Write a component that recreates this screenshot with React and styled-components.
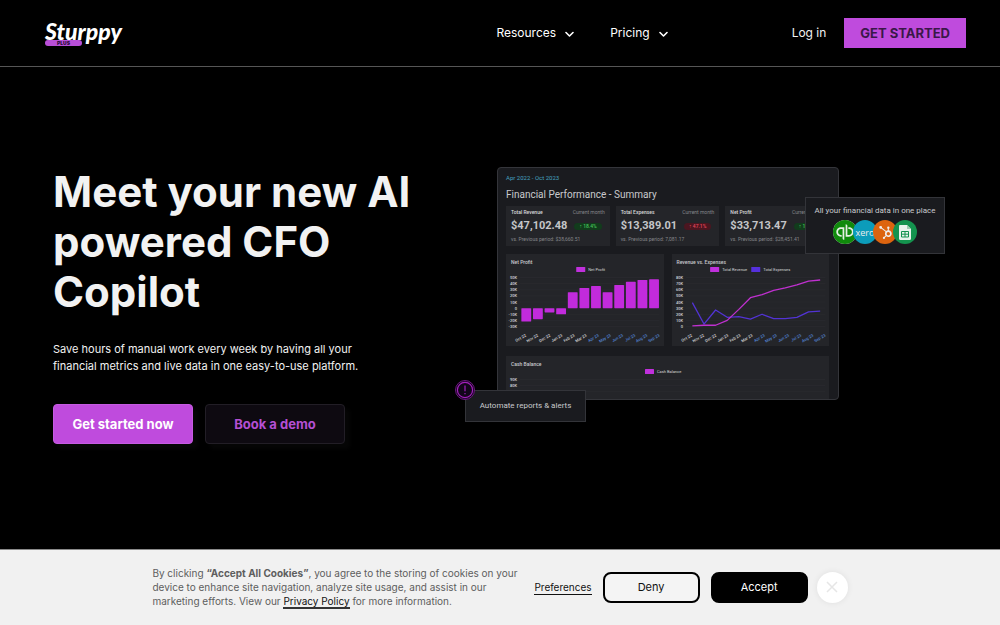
import React from 'react';
import styled, { createGlobalStyle } from 'styled-components';
import { SiHubspot, SiQuickbooks } from 'react-icons/si';

const GlobalStyle = createGlobalStyle`
  *, *::before, *::after {
    box-sizing: border-box;
  }

  body {
    margin: 0;
    background: #000;
    color: #f2f2f2;
    font-family: Inter, 'Liberation Sans', sans-serif;
  }

  a {
    color: inherit;
    text-decoration: none;
  }

  button {
    font-family: inherit;
    cursor: pointer;
  }

  h1, h2, h3, p, ul {
    margin: 0;
    padding: 0;
  }
`;

const Page = styled.div`
  min-height: 100vh;
  display: flex;
  flex-direction: column;
`;

/* Header */

const Header = styled.header`
  display: flex;
  align-items: center;
  padding: 18px 34px 18px 45px;
  border-bottom: 1px solid #565656;
`;

const Logo = styled.a`
  display: flex;
  flex-direction: column;
  align-items: flex-start;
`;

const LogoName = styled.span`
  font: italic 900 23px/22px Lato, sans-serif;
  color: #fff;
`;

const LogoTag = styled.span`
  width: 37px;
  margin-top: -2px;
  border-radius: 3px;
  background: #b94fd8;
  color: #2a0a38;
  font-size: 5px;
  font-weight: 900;
  line-height: 6px;
  text-align: center;
`;

const Nav = styled.nav`
  display: flex;
  gap: 36px;
  margin-left: auto;
`;

const NavButton = styled.button`
  display: flex;
  align-items: center;
  gap: 9px;
  padding: 0;
  border: 0;
  background: none;
  color: #fff;
  font-size: 12px;
  line-height: 20px;
`;

const Actions = styled.div`
  display: flex;
  align-items: center;
  gap: 18px;
  margin-left: 124px;
`;

const LoginLink = styled.a`
  font-size: 12px;
  line-height: 20px;
`;

const StartLink = styled.a`
  padding: 5px 16px;
  background: #bf4bdd;
  color: #3a1848;
  font-size: 13px;
  font-weight: 700;
  line-height: 20px;
`;

/* Hero */

const Hero = styled.main`
  flex: 1;
  display: grid;
  grid-template-columns: minmax(0, 1fr) minmax(0, 450px);
  align-items: start;
  gap: 32px;
  padding: 100px 53px 32px;
`;

const Title = styled.h1`
  font-size: 42px;
  font-weight: 700;
  line-height: 50px;
`;

const Lead = styled.p`
  max-width: 320px;
  margin-top: 24px;
  font-size: 11px;
  line-height: 17px;
`;

const Buttons = styled.div`
  display: flex;
  gap: 12px;
  margin-top: 29px;
`;

const Button = styled.a`
  width: 140px;
  padding: 9px 0;
  border: 1px solid ${({ $primary }) => ($primary ? '#c65be2' : '#221e26')};
  border-radius: 4px;
  background: ${({ $primary }) => ($primary ? '#bf4bdd' : '#0e0a11')};
  color: ${({ $primary }) => ($primary ? '#fff' : '#b44fd3')};
  box-shadow: 5px 5px 4px #060606;
  font-size: 13px;
  font-weight: 700;
  line-height: 20px;
  text-align: center;
`;

/* Dashboard preview */

const Preview = styled.div`
  position: relative;
  max-width: 342px;
  font-family: Roboto, sans-serif;
  color: #c9cacd;
`;

const Dashboard = styled.section`
  padding: 6px 9px 0 8px;
  border: 1px solid #34353a;
  border-radius: 4px;
  background: #1a1b1f;
`;

const Period = styled.p`
  color: #45a0bf;
  font-size: 6px;
  line-height: 8px;
`;

const DashboardTitle = styled.h2`
  margin: 7px 0 5px;
  font-size: 10px;
  font-weight: 400;
  line-height: 12px;
`;

const Metrics = styled.div`
  display: grid;
  grid-template-columns: repeat(3, 1fr);
  gap: 6px;
`;

const Metric = styled.div`
  padding: 3px 5px;
  background: #242529;
`;

const MetricRow = styled.div`
  display: flex;
  justify-content: ${({ $spread }) => ($spread ? 'space-between' : 'flex-start')};
  align-items: center;
  gap: ${({ $spread }) => ($spread ? 0 : '7px')};
`;

const Label = styled.span`
  color: ${({ $muted }) => ($muted ? '#85868a' : '#d8d9db')};
  font-size: 5px;
  font-weight: ${({ $muted }) => ($muted ? 400 : 500)};
  line-height: 7px;
`;

const Value = styled.strong`
  color: #c4c5c8;
  font-size: 11px;
  font-weight: 700;
  line-height: 20px;
`;

const Change = styled.span`
  padding: 0 5px;
  border-radius: 4px;
  background: ${({ $down }) => ($down ? '#4b1620' : '#123c1c')};
  color: ${({ $down }) => ($down ? '#e2475c' : '#45c45b')};
  font-size: 5px;
  font-weight: 500;
  line-height: 7px;
`;

const Charts = styled.div`
  display: grid;
  grid-template-columns: 1fr 1fr;
  gap: 8px;
  margin: 8px 0 10px;
`;

const Panel = styled.div`
  padding-top: 5px;
  background: #242529;

  svg {
    display: block;
    width: 100%;
  }
`;

const PanelTitle = styled.h3`
  padding-left: 5px;
  font-size: 5px;
  font-weight: 500;
  line-height: 6px;
`;

const ChartText = styled.text`
  fill: ${({ $blue }) => ($blue ? '#5587d6' : '#d4d5d8')};
  font: ${({ $bold }) => ($bold ? 500 : 400)} 4px Roboto, sans-serif;
`;

const Callout = styled.div`
  position: absolute;
  border: 1px solid #333439;
  background: #1a1b1f;
  text-align: center;
`;

const DataCallout = styled(Callout)`
  top: 30px;
  left: 308px;
  width: 140px;
  padding: 7px 0 9px;
  font-size: 8px;
  line-height: 12px;
`;

const AlertCallout = styled(Callout)`
  bottom: -22px;
  left: -32px;
  width: 121px;
  font-size: 8px;
  line-height: 30px;
`;

const AlertIcon = styled.svg`
  position: absolute;
  top: -11px;
  left: -11px;
`;

const Sources = styled.ul`
  display: flex;
  justify-content: center;
  margin-top: 3px;
  list-style: none;
`;

const Source = styled.li`
  display: flex;
  align-items: center;
  justify-content: center;
  width: 24px;
  height: 24px;
  border-radius: 50%;
  background: ${({ $color }) => $color};
  color: #eee;
  font: 9px 'Open Sans', sans-serif;

  & + & {
    margin-left: -4px;
  }
`;

/* Cookie banner */

const Banner = styled.aside`
  display: flex;
  align-items: center;
  justify-content: center;
  padding: 16px 24px 17px;
  border-top: 1px solid #8a8a8a;
  background: #f1f1f1;
  color: #5e5e5e;
`;

const BannerText = styled.p`
  max-width: 370px;
  margin-right: 12px;
  font-size: 10px;
  line-height: 14px;
`;

const PolicyLink = styled.a`
  border-bottom: 2px solid #333;
  color: #111;
`;

const Preferences = styled.button`
  padding: 0;
  margin-right: 11px;
  border: 0;
  border-bottom: 1px solid #111;
  background: none;
  color: #111;
  font-size: 10px;
  line-height: 14px;
`;

const Choice = styled.button`
  width: 97px;
  margin-right: ${({ $dark }) => ($dark ? '9px' : '11px')};
  padding: 0;
  border: 2px solid #000;
  border-radius: 8px;
  background: ${({ $dark }) => ($dark ? '#000' : '#f4f4f4')};
  color: ${({ $dark }) => ($dark ? '#fff' : '#111')};
  font-size: 11px;
  line-height: 27px;
`;

const Close = styled.button`
  display: flex;
  align-items: center;
  justify-content: center;
  width: 31px;
  height: 31px;
  padding: 0;
  border: 0;
  border-radius: 50%;
  background: #fff;
  box-shadow: 0 0 6px rgba(0, 0, 0, 0.08);
`;

const months = ['Oct 22', 'Nov 22', 'Dec 22', 'Jan 23', 'Feb 23', 'Mar 23', 'Apr 23', 'May 23', 'Jun 23', 'Jul 23', 'Aug 23', 'Sep 23'];
const profit = [-22, -18, -7, -10, 26, 33, 36, 26, 38, 43, 46, 47];
const revenue = [1, 2, 2, 10, 28, 47, 52, 59, 63, 68, 74, 76];
const expenses = [39, 4, 27, 15, 16, 12, 20, 13, 13, 15, 24, 25];

const metrics = [
  { label: 'Total Revenue', value: '$47,102.48', change: '↑ 18.4%', previous: '$38,660.51' },
  { label: 'Total Expenses', value: '$13,389.01', change: '↑ 47.1%', previous: '7,081.17', down: true },
  { label: 'Net Profit', value: '$33,713.47', change: '↑ 18.1%', previous: '$28,451.41' },
];

const STEP = 11.58;
const LABEL_STEP = 12.1;
const UNIT = 0.61;

const Chevron = () => (
  <svg width="9" height="20" viewBox="0 0 9 20" fill="none" stroke="#fff" strokeWidth="1.6" strokeLinecap="round" strokeLinejoin="round" aria-hidden="true">
    <path d="M1 9.5l3.5 3.5L8 9.5" />
  </svg>
);

const Axes = ({ top, bottom, right = 153 }) => {
  const ticks = [];
  for (let v = top; v >= bottom; v -= 10) ticks.push(v);
  return ticks.map((v) => {
    const y = 12.5 + (top - v) * UNIT;
    return (
      <g key={v}>
        <line x1="14" x2={right} y1={y} y2={y} stroke="#303136" strokeWidth="0.4" />
        <ChartText $bold x="11" y={y + 1.5} textAnchor="end">
          {v === 0 ? '0' : `${v}K`}
        </ChartText>
      </g>
    );
  });
};

const Months = () =>
  months.map((month, i) => {
    const x = 20.3 + i * LABEL_STEP;
    return (
      <ChartText $bold key={month} $blue={i > 5} x={x} y="71" textAnchor="end" transform={`rotate(-30 ${x} 71)`}>
        {month}
      </ChartText>
    );
  });

const Legend = ({ x, color, children }) => (
  <g>
    <rect x={x} y="2" width="9" height="5" rx="0.5" fill={color} />
    <ChartText x={x + 12} y="6">
      {children}
    </ChartText>
  </g>
);

const line = (values) =>
  values.map((v, i) => `${20.3 + i * STEP},${12.5 + (80 - v) * UNIT}`).join(' ');

const ProfitChart = () => (
  <svg viewBox="0 0 157 81" role="img" aria-label="Net profit by month">
    <Legend x={70} color="#c030dc">Net Profit</Legend>
    <Axes top={50} bottom={-30} />
    {profit.map((v, i) => (
      <rect
        key={months[i]}
        x={15.3 + i * STEP}
        y={v > 0 ? 43 - v * UNIT : 43}
        width="9.8"
        height={Math.abs(v) * UNIT}
        rx="0.6"
        fill="#c22bdc"
      />
    ))}
    <Months />
  </svg>
);

const RevenueChart = () => (
  <svg viewBox="0 0 157 81" role="img" aria-label="Revenue and expenses by month">
    <Legend x={38} color="#c030dc">Total Revenue</Legend>
    <Legend x={79} color="#5530dc">Total Expenses</Legend>
    <Axes top={80} bottom={0} />
    <polyline points={line(expenses)} fill="none" stroke="#5233d4" strokeWidth="1.3" strokeLinejoin="round" />
    <polyline points={line(revenue)} fill="none" stroke="#c030d0" strokeWidth="1.3" strokeLinejoin="round" />
    <Months />
  </svg>
);

const CashChart = () => (
  <svg viewBox="0 0 323 32" role="img" aria-label="Cash balance">
    <Legend x={139} color="#c030dc">Cash Balance</Legend>
    <Axes top={90} bottom={80} right={319} />
    <line x1="14" x2="319" y1="24.7" y2="24.7" stroke="#303136" strokeWidth="0.4" />
  </svg>
);

const SheetsIcon = () => (
  <svg width="12" height="15" viewBox="0 0 12 15" aria-hidden="true">
    <path d="M1.2 0H8l4 4v9.8c0 .7-.5 1.2-1.2 1.2H1.2C.5 15 0 14.5 0 13.8V1.2C0 .5.5 0 1.2 0z" fill="#e9f3ec" />
    <path d="M8 0l4 4H8z" fill="#9fcfb1" />
    <path d="M2.5 6.5h7V12h-7zM6 6.5V12M2.5 9.2h7" fill="none" stroke="#14934e" />
  </svg>
);

const MetricCard = ({ label, value, change, previous, down }) => (
  <Metric>
    <MetricRow $spread>
      <Label>{label}</Label>
      <Label $muted>Current month</Label>
    </MetricRow>
    <MetricRow>
      <Value>{value}</Value>
      <Change $down={down}>{change}</Change>
    </MetricRow>
    <MetricRow>
      <Label $muted>vs. Previous period: {previous}</Label>
    </MetricRow>
  </Metric>
);

const App = () => (
  <Page>
    <GlobalStyle />
    <Header>
      <Logo href="#">
        <LogoName>Sturppy</LogoName>
        <LogoTag>PLUS</LogoTag>
      </Logo>
      <Nav>
        <NavButton>
          Resources <Chevron />
        </NavButton>
        <NavButton>
          Pricing <Chevron />
        </NavButton>
      </Nav>
      <Actions>
        <LoginLink href="#login">Log in</LoginLink>
        <StartLink href="#start">GET STARTED</StartLink>
      </Actions>
    </Header>

    <Hero>
      <div>
        <Title>Meet your new AI powered CFO Copilot</Title>
        <Lead>
          Save hours of manual work every week by having all your financial metrics and live data in one easy-to-use
          platform.
        </Lead>
        <Buttons>
          <Button $primary href="#start">
            Get started now
          </Button>
          <Button href="#demo">Book a demo</Button>
        </Buttons>
      </div>

      <Preview>
        <Dashboard>
          <Period>Apr 2022 - Oct 2023</Period>
          <DashboardTitle>Financial Performance - Summary</DashboardTitle>
          <Metrics>
            {metrics.map((metric) => (
              <MetricCard key={metric.label} {...metric} />
            ))}
          </Metrics>
          <Charts>
            <Panel>
              <PanelTitle>Net Profit</PanelTitle>
              <ProfitChart />
            </Panel>
            <Panel>
              <PanelTitle>Revenue vs. Expenses</PanelTitle>
              <RevenueChart />
            </Panel>
          </Charts>
          <Panel>
            <PanelTitle>Cash Balance</PanelTitle>
            <CashChart />
          </Panel>
        </Dashboard>
        <DataCallout>
          All your financial data in one place
          <Sources>
            <Source $color="#e6efe4">
              <SiQuickbooks size={24} color="#108a0c" title="QuickBooks" />
            </Source>
            <Source $color="#0c9cba">xero</Source>
            <Source $color="#dd640f">
              <SiHubspot size={13} title="HubSpot" />
            </Source>
            <Source $color="#14934e">
              <SheetsIcon />
            </Source>
          </Sources>
        </DataCallout>
        <AlertCallout>
          <AlertIcon width="20" height="20" viewBox="0 0 20 20" fill="none" aria-hidden="true">
            <circle cx="10" cy="10" r="9.5" fill="#12061a" stroke="#6d1580" />
            <circle cx="10" cy="10" r="7.6" stroke="#a31fbd" strokeWidth="1.2" />
            <path d="M10 5.5v5.8M10 13v1.3" stroke="#a31fbd" strokeWidth="1.2" />
          </AlertIcon>
          Automate reports &amp; alerts
        </AlertCallout>
      </Preview>
    </Hero>

    <Banner>
      <BannerText>
        By clicking <strong>“Accept All Cookies”</strong>, you agree to the storing of cookies on your device to enhance
        site navigation, analyze site usage, and assist in our marketing efforts. View our{' '}
        <PolicyLink href="#privacy">Privacy Policy</PolicyLink> for more information.
      </BannerText>
      <Preferences>Preferences</Preferences>
      <Choice>Deny</Choice>
      <Choice $dark>Accept</Choice>
      <Close aria-label="Close">
        <svg width="12" height="12" viewBox="0 0 12 12" stroke="#e6e6e6" strokeWidth="1.5" aria-hidden="true">
          <path d="M1 1l10 10M11 1L1 11" />
        </svg>
      </Close>
    </Banner>
  </Page>
);

export default App;
